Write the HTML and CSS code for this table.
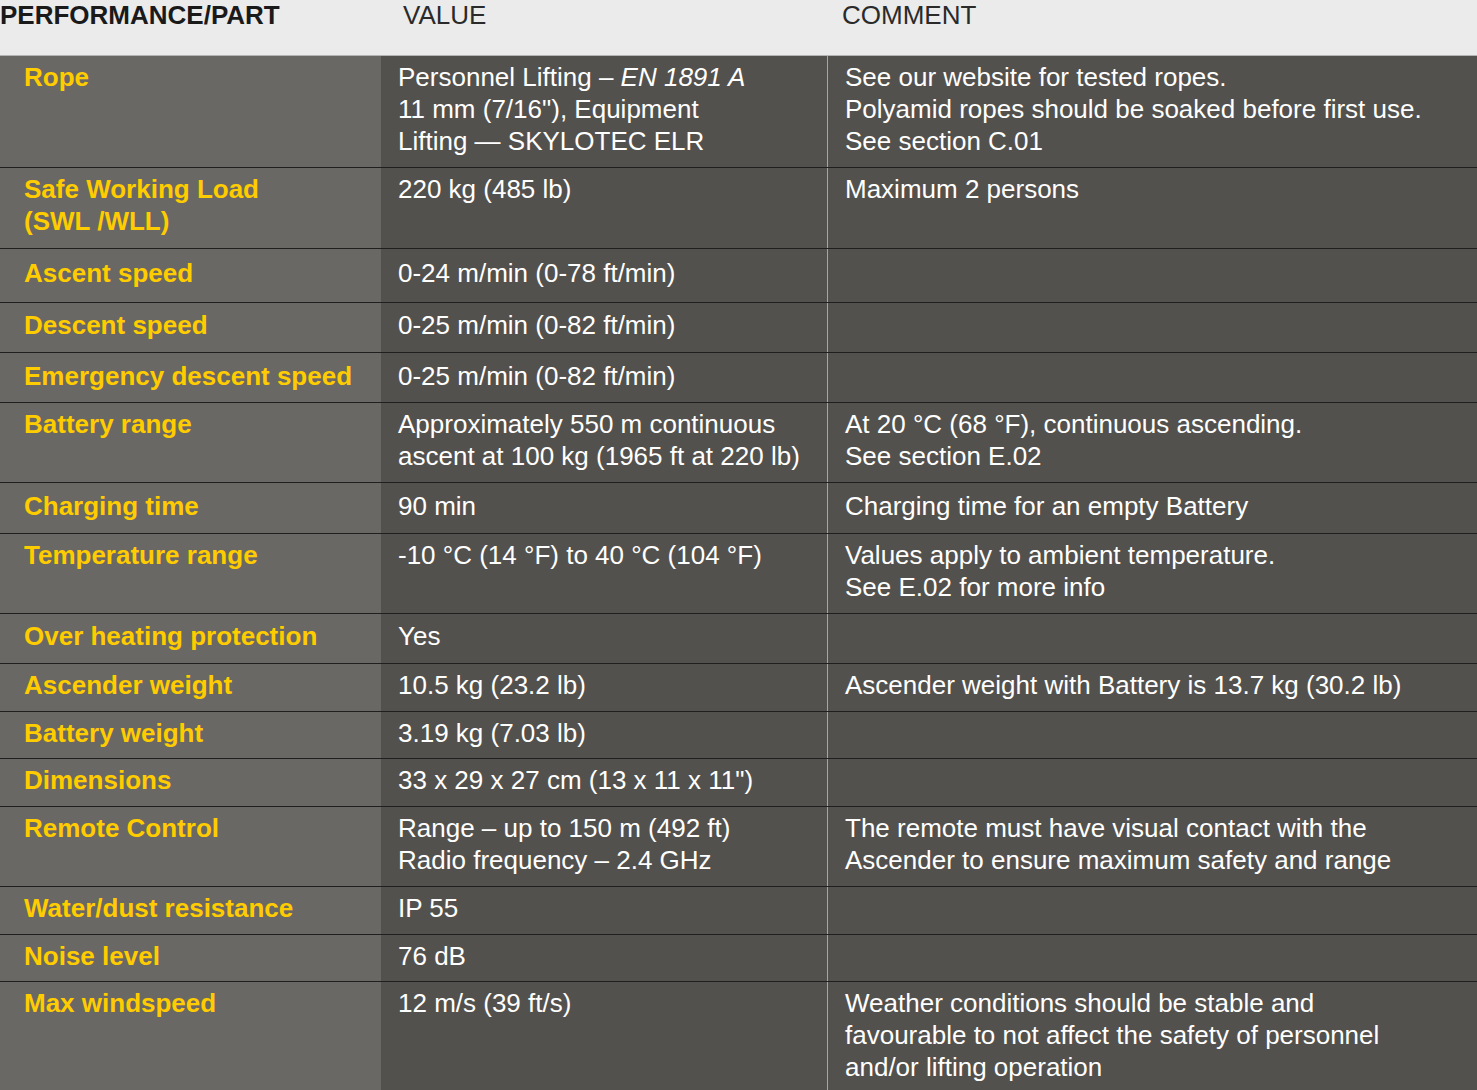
FILE: index.html
```html
<!DOCTYPE html>
<html>
<head>
<meta charset="utf-8">
<title>Performance</title>
<link rel="stylesheet" href="styles.css">
</head>
<body>
<div class="spec">
  <div class="head">
    <div class="h1">PERFORMANCE/PART</div>
    <div class="h2">VALUE</div>
    <div class="h3">COMMENT</div>
  </div>

  <div class="row">
    <div class="c1">Rope</div>
    <div class="c2">Personnel Lifting – <em>EN 1891 A</em><br>11 mm (7/16"), Equipment<br>Lifting — SKYLOTEC ELR</div>
    <div class="c3">See our website for tested ropes.<br>Polyamid ropes should be soaked before first use.<br>See section C.01</div>
  </div>
  <div class="row h81">
    <div class="c1">Safe Working Load<br>(SWL /WLL)</div>
    <div class="c2">220 kg (485 lb)</div>
    <div class="c3">Maximum 2 persons</div>
  </div>
  <div class="row h54">
    <div class="c1">Ascent speed</div>
    <div class="c2">0-24 m/min (0-78 ft/min)</div>
    <div class="c3"></div>
  </div>
  <div class="row h50">
    <div class="c1">Descent speed</div>
    <div class="c2">0-25 m/min (0-82 ft/min)</div>
    <div class="c3"></div>
  </div>
  <div class="row h50 p7">
    <div class="c1">Emergency descent speed</div>
    <div class="c2">0-25 m/min (0-82 ft/min)</div>
    <div class="c3"></div>
  </div>
  <div class="row">
    <div class="c1">Battery range</div>
    <div class="c2">Approximately 550 m continuous<br>ascent at 100 kg (1965 ft at 220 lb)</div>
    <div class="c3">At 20 °C (68 °F), continuous ascending.<br>See section E.02</div>
  </div>
  <div class="row h51 p7">
    <div class="c1">Charging time</div>
    <div class="c2">90 min</div>
    <div class="c3">Charging time for an empty Battery</div>
  </div>
  <div class="row">
    <div class="c1">Temperature range</div>
    <div class="c2">-10 °C (14 °F) to 40 °C (104 °F)</div>
    <div class="c3">Values apply to ambient temperature.<br>See E.02 for more info</div>
  </div>
  <div class="row h50">
    <div class="c1">Over heating protection</div>
    <div class="c2">Yes</div>
    <div class="c3"></div>
  </div>
  <div class="row">
    <div class="c1">Ascender weight</div>
    <div class="c2">10.5 kg (23.2 lb)</div>
    <div class="c3">Ascender weight with Battery is 13.7 kg (30.2 lb)</div>
  </div>
  <div class="row h47">
    <div class="c1">Battery weight</div>
    <div class="c2">3.19 kg (7.03 lb)</div>
    <div class="c3"></div>
  </div>
  <div class="row">
    <div class="c1">Dimensions</div>
    <div class="c2">33 x 29 x 27 cm (13 x 11 x 11")</div>
    <div class="c3"></div>
  </div>
  <div class="row">
    <div class="c1">Remote Control</div>
    <div class="c2">Range – up to 150 m (492 ft)<br>Radio frequency – 2.4 GHz</div>
    <div class="c3">The remote must have visual contact with the<br>Ascender to ensure maximum safety and range</div>
  </div>
  <div class="row">
    <div class="c1">Water/dust resistance</div>
    <div class="c2">IP 55</div>
    <div class="c3"></div>
  </div>
  <div class="row h47">
    <div class="c1">Noise level</div>
    <div class="c2">76 dB</div>
    <div class="c3"></div>
  </div>
  <div class="row last">
    <div class="c1">Max windspeed</div>
    <div class="c2">12 m/s (39 ft/s)</div>
    <div class="c3">Weather conditions should be stable and<br>favourable to not affect the safety of personnel<br>and/or lifting operation</div>
  </div>
</div>
</body>
</html>
```

FILE: styles.css
```css
html, body {
  margin: 0;
  padding: 0;
  background: #53514d;
}

body {
  font-family: "Liberation Sans", Arial, Helvetica, sans-serif;
  font-size: 26px;
  color: #ffffff;
}

.spec {
  width: 1477px;
}

.head {
  display: grid;
  grid-template-columns: 381px 447px 1fr;
  height: 55px;
  box-sizing: border-box;
  padding-top: 2px;
  background: #ebebeb;
  border-bottom: 1px solid #b4b4b4;
  color: #1a1a1a;
  line-height: 26px;
}

.head {
  height: 56px;
}

.h1 {
  font-weight: bold;
  padding-left: 0;
}

.h2 {
  padding-left: 22px;
  color: #2a2a2a;
}

.h3 {
  padding-left: 14px;
  color: #2a2a2a;
}

.row {
  display: grid;
  grid-template-columns: 381px 447px 1fr;
  border-bottom: 1px solid #1f1f1f;
  line-height: 32px;
  box-sizing: border-box;
}

.row > div {
  padding: 5px 0 10px 0;
}

.c1 {
  background: #6a6864;
  color: #ffcc00;
  font-weight: bold;
  padding-left: 24px !important;
}

.c2 {
  background: #53514d;
  border-right: 1px solid #a6a6a6;
  padding-left: 17px !important;
}

.c3 {
  background: #53514d;
  padding-left: 17px !important;
}

.c2 em {
  font-style: italic;
}

.h81 {
  height: 81px;
}

.h54 {
  height: 54px;
}

.h54 > div {
  padding-top: 8px;
}

.h51 {
  height: 51px;
}

.h50 {
  height: 50px;
}

.h50 > div {
  padding-top: 6px;
}

.p7 > div {
  padding-top: 7px;
}

.h47 {
  height: 47px;
}

.h47 > div {
  padding-bottom: 9px;
}

.last {
  border-bottom: none;
}
```
